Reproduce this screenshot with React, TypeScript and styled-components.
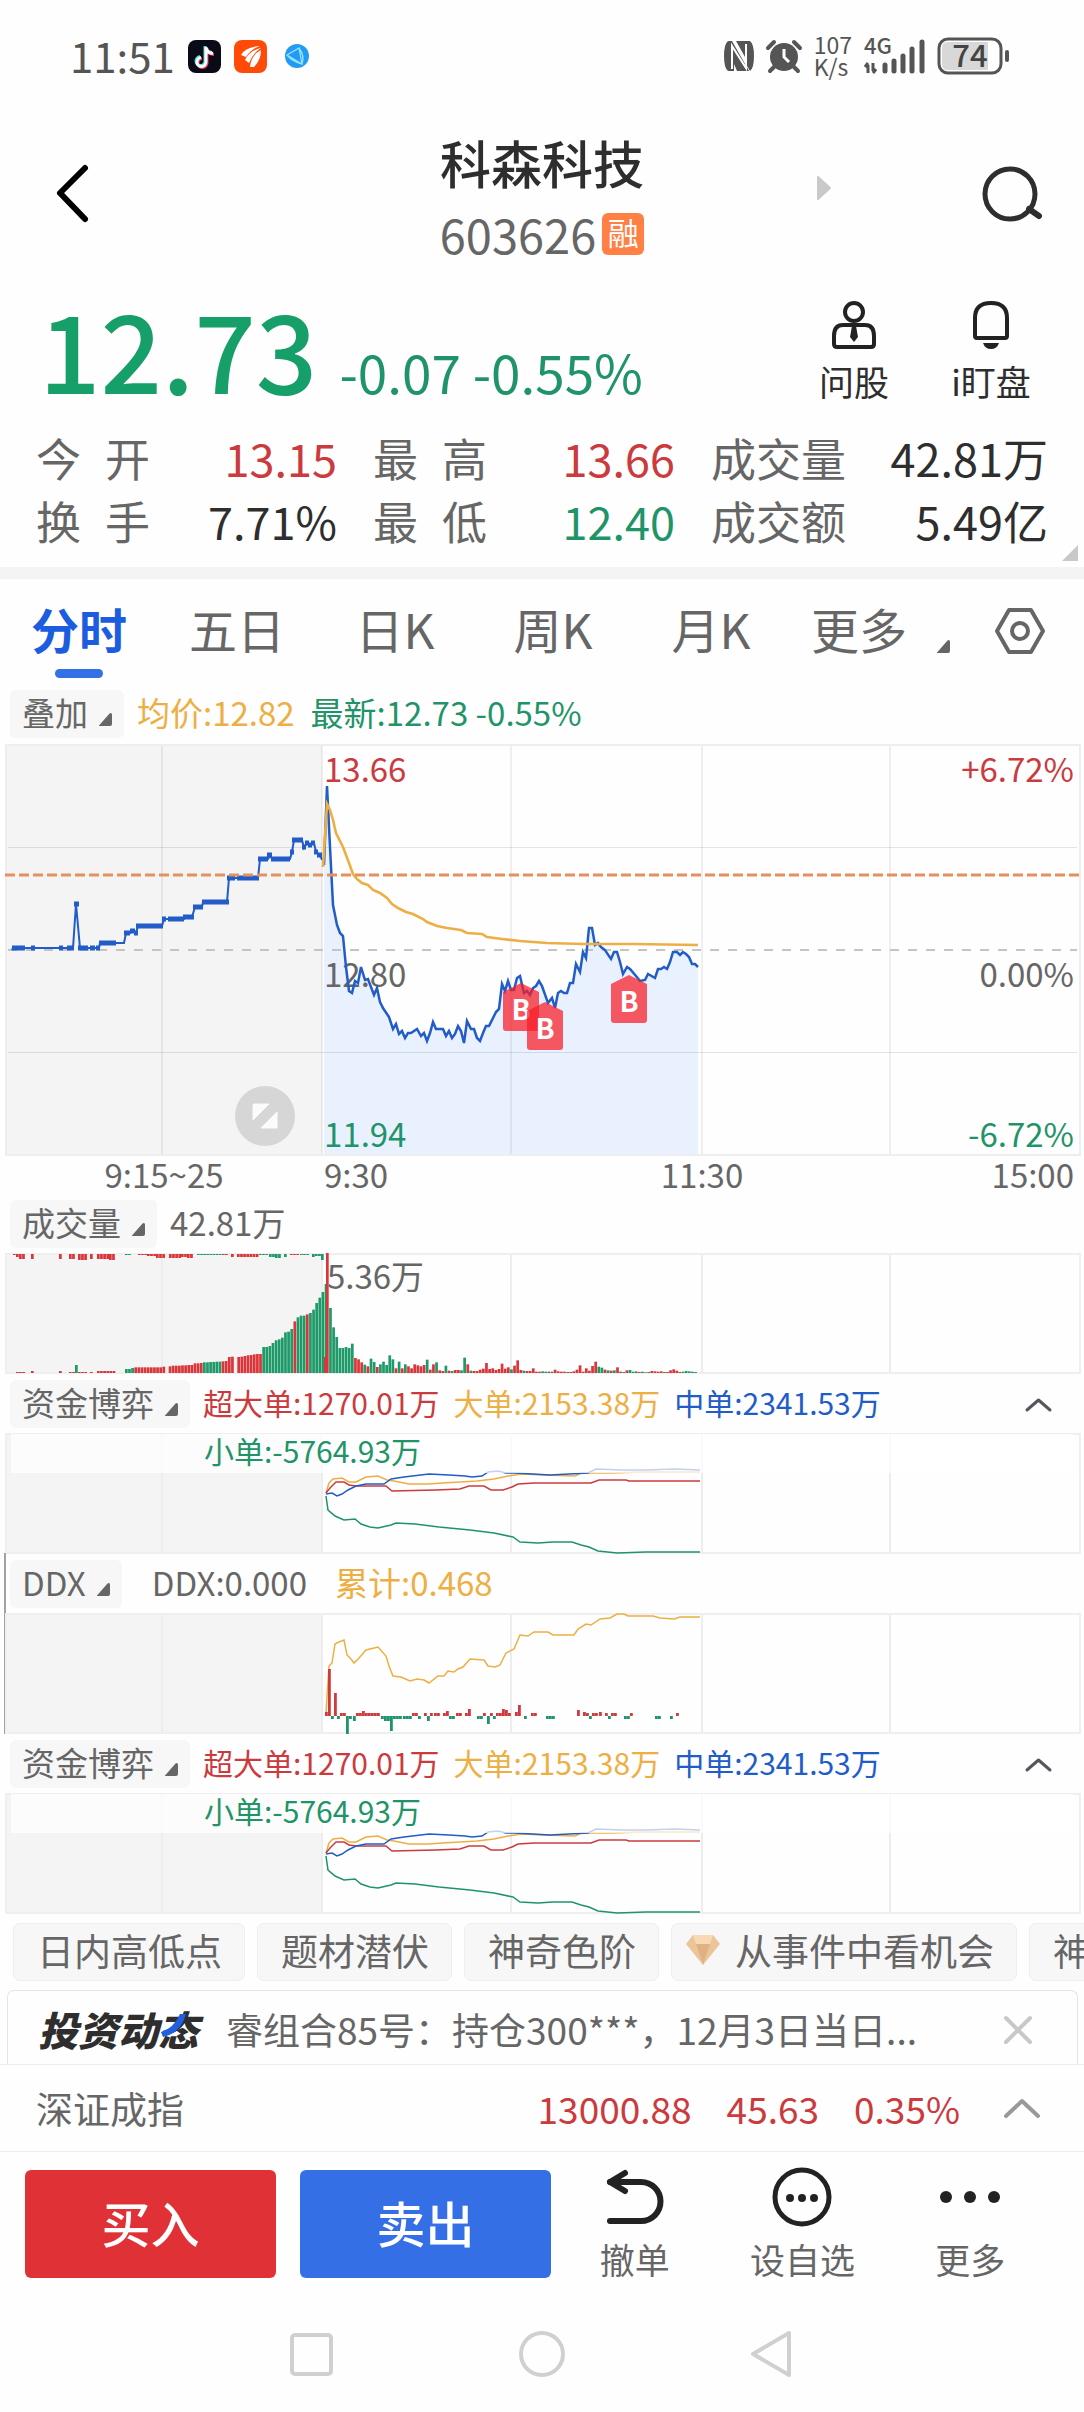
import React from "react";
import styled, { createGlobalStyle } from "styled-components";

const RED = "#cb3b3e";
const GREEN = "#1f9469";
const BLUE = "#215cc8";
const AMBER = "#edaf44";
const GREY = "#666666";
const INK = "#2e2e2e";

const GlobalStyle = createGlobalStyle`
  * { box-sizing: border-box; }
  body {
    margin: 0;
    background: #fefefe;
    color: ${INK};
    font-family: "Noto Sans CJK SC", "Noto Sans", sans-serif;
    overflow-x: hidden;
  }
  button {
    font: inherit;
    color: inherit;
    background: none;
    border: 0;
    padding: 0;
    cursor: pointer;
  }
  svg { display: block; flex: none; overflow: visible; }
`;

/* ---------- status bar ---------- */

const StatusBar = styled.div`
  display: flex;
  align-items: center;
  justify-content: space-between;
  height: 112px;
  padding: 0 73px 0 70px;
  color: #555;
`;

const StatusGroup = styled.div<{ $gap: number }>`
  display: flex;
  align-items: center;
  gap: ${(p) => p.$gap}px;
`;

const Clock = styled.span`
  font-size: 42px;
  line-height: 48px;
  padding-bottom: 2px;
`;

const NetSpeed = styled.span`
  display: flex;
  flex-direction: column;
  font-size: 23px;
  line-height: 22px;
  padding-bottom: 3px;
`;

/* ---------- header ---------- */

const Header = styled.header`
  display: grid;
  grid-template-columns: 1fr auto 1fr;
  align-items: center;
  height: 166px;
  padding: 0 40px;
`;

const BackButton = styled.button`
  margin-left: 12px;
`;

const TitleBlock = styled.div`
  display: flex;
  flex-direction: column;
  align-items: center;
  gap: 10px;
  padding-top: 6px;
`;

const StockName = styled.h1`
  margin: 0;
  font-size: 51px;
  font-weight: 500;
  line-height: 62px;
`;

const CodeRow = styled.div`
  display: flex;
  align-items: center;
  gap: 6px;
  font-size: 47px;
  line-height: 62px;
  color: ${GREY};
`;

const MarginBadge = styled.span`
  width: 42px;
  height: 42px;
  border-radius: 6px;
  background: #fe8045;
  color: #fff;
  font-size: 31px;
  line-height: 38px;
  text-align: center;
`;

const HeaderRight = styled.div`
  display: flex;
  align-items: center;
  justify-content: space-between;
  padding-left: 172px;
`;

const NextButton = styled.button`
  padding-bottom: 14px;
`;

/* ---------- quote ---------- */

const Quote = styled.section`
  position: relative;
  padding-bottom: 15px;
  border-bottom: 12px solid #f4f4f4;
`;

const PriceRow = styled.div`
  display: flex;
  justify-content: space-between;
  align-items: flex-start;
  height: 148px;
  padding: 9px 33px 0 39px;
  color: ${GREEN};
`;

const PriceGroup = styled.div`
  display: flex;
  align-items: flex-end;
  gap: 22px;
`;

const Price = styled.strong`
  font-size: 108px;
  font-weight: 500;
  line-height: 120px;
  color: #179f69;
`;

const Change = styled.span`
  font-size: 53px;
  line-height: 64px;
  padding-bottom: 4px;
`;

const QuickActions = styled.div`
  display: flex;
  gap: 17px;
  padding-top: 14px;
`;

const QuickButton = styled.button`
  display: flex;
  flex-direction: column;
  align-items: center;
  gap: 12px;
  width: 120px;
  color: ${INK};
  font-size: 35px;
  line-height: 40px;
`;

const Stats = styled.dl`
  display: grid;
  grid-template-columns: 301fr 302fr 337fr;
  column-gap: 36px;
  margin: 0;
  padding: 0 36px;
`;

const Stat = styled.div`
  display: flex;
  justify-content: space-between;
  font-size: 45px;
  line-height: 63px;
`;

const StatLabel = styled.dt<{ $spread?: boolean }>`
  color: ${GREY};
  width: ${(p) => (p.$spread ? "114px" : "auto")};
  text-align-last: ${(p) => (p.$spread ? "justify" : "auto")};
`;

const StatValue = styled.dd<{ $color: string }>`
  margin: 0;
  color: ${(p) => p.$color};
`;

const Corner = styled.svg`
  position: absolute;
  right: 6px;
  bottom: 6px;
`;

/* ---------- period tabs ---------- */

const Tabs = styled.nav`
  display: grid;
  grid-template-columns: repeat(5, 158fr) 180fr 114fr;
  height: 102px;
`;

const Tab = styled.button<{ $active?: boolean }>`
  position: relative;
  padding-bottom: 4px;
  font-size: 48px;
  line-height: 98px;
  font-weight: ${(p) => (p.$active ? 700 : 400)};
  color: ${(p) => (p.$active ? "#1c5cde" : GREY)};
  &::after {
    content: "";
    display: ${(p) => (p.$active ? "block" : "none")};
    position: absolute;
    left: calc(50% - 24px);
    bottom: 3px;
    width: 48px;
    height: 9px;
    border-radius: 5px;
    background: #3470e6;
  }
`;

const MoreTab = styled.button`
  display: flex;
  align-items: center;
  gap: 30px;
  padding: 0 0 4px 21px;
  font-size: 48px;
  line-height: 98px;
  color: ${GREY};
  svg { margin-top: 36px; }
`;

const SettingsButton = styled.button`
  display: flex;
  align-items: center;
  padding: 2px 0 0 24px;
`;

/* ---------- indicator panels ---------- */

const PanelHead = styled.div`
  display: flex;
  align-items: center;
  height: 48px;
  padding: 0 32px 0 10px;
`;

const OverlayHead = styled(PanelHead)`
  margin: 9px 0 6px;
`;

const Picker = styled.button`
  display: flex;
  align-items: center;
  gap: 11px;
  height: 48px;
  padding: 0 12px 4px 12px;
  border-radius: 6px;
  background: #f7f7f7;
  color: ${GREY};
  font-size: 33px;
  line-height: 44px;
  svg { margin-top: 14px; }
`;

const Values = styled.div<{ $indent: number; $gap: number; $size?: number }>`
  display: flex;
  flex: 1;
  gap: ${(p) => p.$gap}px;
  padding: 0 0 4px ${(p) => p.$indent}px;
  font-size: ${(p) => p.$size ?? 33}px;
  line-height: 44px;
  white-space: nowrap;
`;

const Value = styled.span<{ $color: string }>`
  color: ${(p) => p.$color};
`;

const Panel = styled.section<{ $cursor?: boolean }>`
  position: relative;
  padding-bottom: 6px;
  &::before {
    content: "";
    display: ${(p) => (p.$cursor ? "block" : "none")};
    position: absolute;
    left: 4px;
    top: -7px;
    bottom: 6px;
    width: 2px;
    background: #a3a3a3;
  }
`;

const ChartArea = styled.div`
  position: relative;
  margin-top: 5px;
`;

const Chart = styled.svg`
  width: 100%;
  height: auto;
`;

const MainChart = styled(Chart)`
  margin-bottom: 4px;
`;

const ValueStrip = styled.div`
  position: absolute;
  left: 11px;
  right: 11px;
  top: 1px;
  height: 39px;
  padding-left: 193px;
  background: rgba(255, 255, 255, 0.72);
  color: ${GREEN};
  font-size: 30px;
  line-height: 32px;
`;

/* ---------- chips, news, index ---------- */

const Chips = styled.div`
  display: flex;
  gap: 12px;
  margin-top: 3px;
  padding-left: 13px;
  overflow: hidden;
`;

const Chip = styled.button<{ $icon?: boolean }>`
  display: flex;
  flex: none;
  align-items: center;
  gap: 15px;
  height: 58px;
  padding: 0 22px 4px ${(p) => (p.$icon ? 14 : 23)}px;
  border: 1px solid #eeeeee;
  border-radius: 7px;
  background: #f7f7f7;
  color: ${GREY};
  font-size: 37px;
  line-height: 52px;
  white-space: nowrap;
`;

const News = styled.section`
  display: flex;
  align-items: center;
  height: 74px;
  margin: 9px 6px 0 7px;
  padding: 4px 45px 0 30px;
  border: 1px solid #e4e4e4;
  border-bottom: 0;
  border-radius: 7px 7px 0 0;
`;

const NewsLogo = styled.strong`
  position: relative;
  flex: none;
  margin-right: 28px;
  font-size: 40px;
  font-weight: 900;
  font-style: italic;
  line-height: 60px;
  padding-bottom: 2px;
  svg {
    position: absolute;
    right: 9px;
    top: 15px;
  }
`;

const NewsText = styled.a`
  flex: 1;
  padding-bottom: 2px;
  color: ${GREY};
  font-size: 37px;
  line-height: 60px;
  white-space: nowrap;
  text-decoration: none;
`;

const IndexRow = styled.section`
  display: flex;
  align-items: center;
  justify-content: space-between;
  height: 88px;
  padding: 0 44px 0 36px;
  border-top: 1px solid #ececec;
  border-bottom: 1px solid #ececec;
  color: ${GREY};
  font-size: 37px;
  line-height: 56px;
`;

const IndexValues = styled.div`
  display: flex;
  align-items: center;
  gap: 35px;
  color: ${RED};
  button { padding-left: 9px; }
`;

/* ---------- bottom bars ---------- */

const ActionBar = styled.div`
  display: flex;
  align-items: flex-start;
  height: 144px;
  padding: 18px 30px 0 25px;
`;

const TradePair = styled.div`
  display: grid;
  flex: 526 1 0;
  grid-template-columns: 1fr 1fr;
  gap: 24px;
`;

const TradeButton = styled.button<{ $bg: string }>`
  height: 108px;
  padding-bottom: 4px;
  border-radius: 6px;
  background: ${(p) => p.$bg};
  color: #fff;
  font-size: 49px;
  font-weight: 500;
  line-height: 104px;
`;

const Tools = styled.div`
  display: grid;
  flex: 503 1 0;
  grid-template-columns: repeat(3, 1fr);
`;

const ToolButton = styled.button`
  display: flex;
  flex-direction: column;
  align-items: center;
  gap: 9px;
  color: ${GREY};
  font-size: 35px;
  line-height: 48px;
`;

const SystemNav = styled.nav`
  display: flex;
  align-items: center;
  justify-content: center;
  gap: 182px;
  height: 116px;
`;

/* ---------- small drawings ---------- */

const Caret = ({ size = 13, color = GREY }: { size?: number; color?: string }) => (
  <svg width={size} height={size} viewBox="0 0 13 13" aria-hidden>
    <path d="M0 12.5 10.5.5Q13-1 13 2v9q0 2-2 2H1Q-.5 13 0 12.500Z" fill={color} />
  </svg>
);

const ChevronUp = ({ w, h, stroke, color }: { w: number; h: number; stroke: number; color: string }) => (
  <svg width={w} height={h} viewBox={`0 0 ${w} ${h}`} aria-hidden>
    <path
      d={`M2 ${h - 2} ${w / 2} 3 ${w - 2} ${h - 2}`}
      fill="none"
      stroke={color}
      strokeWidth={stroke}
      strokeLinecap="round"
      strokeLinejoin="round"
    />
  </svg>
);

/* ---------- chart data ---------- */

const GRID_X = [162, 322, 511, 702, 890];

const PRE_MARKET =
  "12,950 13,948 73,948 76,904 80,948 99,948 100,943 124,943 126,933 130,933 133,931 136,933 138,926 162,926 164,919 184,919 185,917 192,917 195,907 202,907 203,902 227,902 229,878 258,878 260,859 268,859 270,855 272,859 290,859 292,852 294,840 302,840 304,848 307,843 310,845 314,843 316,852 320,855 322,860";

const PRE_TICKS =
  "M12 948H25M31 948H35M59 948H63M67 948H74M74 904H79M78 948H88M90 948H95M96 948H100M99 943H116M124 933H130M130 931H135M134 933H138M136 926H163M162 919H166M168 919H184M183 917H194M193 907H203M202 902H229M227 878H235M237 878H259M258 859H268M267 855H272M271 859H290M290 852H294M292 840H303M302 847H306M305 843H309M308 845H312M311 843H315M314 852H318M317 855H322";

const PRICE =
  "324,865 327,786 330,847 333,905 337,925 340,933 343,936 346,967 349,991 352,993 355,981 358,983 361,967 365,980 368,979 374,995 377,988 380,1002 383,1008 389,1017 393,1029 396,1024 399,1034 402,1031 405,1038 408,1033 411,1033 417,1029 421,1036 424,1033 427,1041 430,1033 433,1022 436,1029 443,1029 446,1036 449,1031 452,1038 455,1034 458,1026 461,1031 464,1043 467,1021 471,1029 474,1029 477,1038 480,1041 483,1033 486,1026 489,1026 496,1012 499,1009 502,984 505,991 508,981 511,990 514,990 517,978 520,976 524,993 527,991 530,995 533,988 536,986 539,981 542,986 548,1003 552,998 555,1008 558,993 561,991 564,993 567,993 570,983 573,983 576,964 580,972 583,952 586,958 589,928 592,928 595,945 598,943 601,947 605,950 611,959 614,952 617,952 620,962 623,974 627,967 630,969 636,976 640,981 645,980 648,974 655,978 658,969 661,969 664,967 667,969 670,962 673,952 677,952 680,955 683,952 686,954 689,957 692,964 695,964 698,967";

const AVERAGE =
  "323,867 327,804 330,810 333,820 336,833 343,847 349,863 353,874 357,879 362,883 368,885 373,890 380,893 387,898 392,904 398,908 406,912 413,914 423,919 427,922 437,926 447,928 461,930 467,933 482,934 487,937 502,939 520,941 547,943 583,944 633,944 698,945";

const MARKERS = [
  { x: 503, y: 983 },
  { x: 527, y: 1002 },
  { x: 611, y: 975 },
];

/* Volume bars: colour letter followed by the height in thirds of a unit. */
const PRE_VOLUME =
  "G12 G12 G15 R17 R17 R17 R17 R17 R17 R17 R17 R17 R19 _ R20 R22 R22 R22 R23 R23 R24 R24 R29 R29 R30 G32 G32 G33 G33 G34 G34 R35 R36 R48 R49 _ R48 R49 R51 R53 R54 R56 R57 R57 G78 G78 G81 G90 G98 G101 G106 G122 G124 G132 R155 G167 G172 G172 R176 G180 G190 G210 G226 G243 G267";
const VOLUME =
  "R360 G195 G137 G108 G75 G75 G78 G75 G88 R45 R41 R32 G25 R20 G43 G33 R18 G26 G34 G24 G53 G41 R14 G34 R14 G26 R20 R14 R26 R23 R20 R24 G40 R10 R26 G32 R8 R6 G22 R7 G6 R9 R9 G8 G46 R26 G7 R6 R6 R10 R13 R30 R12 R14 R9 R12 R28 R13 R17 G11 R22 R38 R9 G7 R6 R6 R14 R4 R4 G5 G4 R4 G4 R10 R5 R4 R4 G3 R3 R5 R10 R23 R4 R14 R7 R21 R34 G19 G16 R10 G8 R7 G8 R17 R4 G3 R8 G9 G4 G5 R3 G4 R2 G3 R6 R5 R4 R5 G3 R3 R8 R11 R7 R3 G4 G6 G5 G4 G3";

/* Unmatched auction volume, hanging from the top: [x, count, height, colour]. */
const HANGING: [number, number, number, string][] = [
  [13, 1, 1, "R"], [16, 1, 3, "R"], [19, 2, 5, "R"], [31, 1, 5, "R"], [59, 1, 5, "R"],
  [69, 2, 5, "R"], [78, 3, 6, "R"], [90, 1, 5, "R"], [97, 4, 5, "R"], [109, 2, 6, "R"],
  [125, 2, 1, "G"], [138, 3, 1, "R"], [147, 3, 2, "R"], [156, 3, 4, "R"], [169, 4, 4, "R"],
  [181, 2, 3, "R"], [187, 2, 4, "R"], [197, 8, 1, "G"], [222, 2, 1, "R"], [231, 1, 3, "R"],
  [237, 7, 3, "R"], [259, 3, 1, "G"], [269, 2, 3, "G"], [275, 2, 4, "G"], [284, 1, 3, "G"],
  [290, 3, 1, "R"], [300, 3, 1, "G"], [312, 1, 3, "G"], [315, 2, 2, "G"], [321, 1, 6, "G"],
];

const PRE_SPECKS: [number, number, number, string][] = [
  [16, 3, 1, "R"], [31, 1, 2, "R"], [59, 1, 2, "R"], [69, 2, 1, "R"], [75, 1, 8, "G"],
  [78, 3, 1, "R"], [90, 1, 1, "R"], [97, 6, 2, "R"],
];

const FUND_LINES = [
  {
    color: AMBER,
    points:
      "326,60 329,50 333,46 342,45 349,49 356,49 366,44 378,43 387,47 394,48 409,51 429,51 442,50 460,49 477,48 494,46 508,43 522,41 543,42 575,43 581,40 612,40 640,39 700,39",
  },
  {
    color: RED,
    points:
      "326,60 330,55 336,49 344,49 349,52 356,53 386,53 392,58 436,57 460,56 469,53 484,53 491,57 503,57 512,54 518,51 534,50 591,50 599,47 626,47 629,48 700,48",
  },
  {
    color: BLUE,
    points:
      "326,61 332,60 337,63 342,61 348,57 356,53 366,51 384,51 391,46 404,44 429,41 449,42 465,43 472,44 482,43 488,39 498,38 506,40 515,40 550,42 588,40 596,36 622,37 646,37 674,36 700,37",
  },
  {
    color: GREEN,
    points:
      "326,63 328,77 335,83 344,87 355,86 361,91 370,94 378,95 391,92 396,90 415,91 439,94 470,97 494,100 513,104 520,109 538,110 553,109 572,109 581,112 589,114 598,118 617,120 646,119 700,119",
  },
];

const DDX_LINE =
  "326,100 329,53 332,50 335,31 339,29 344,27 347,42 351,46 354,50 359,45 366,37 378,34 386,43 389,53 393,63 401,64 410,68 417,66 424,67 429,70 438,63 444,63 448,58 454,59 458,56 463,54 470,46 484,47 488,53 495,54 500,52 506,40 514,36 520,22 528,23 534,19 548,19 553,22 574,22 578,16 586,11 591,12 600,6 610,5 617,1 624,1 628,3 653,3 660,5 674,6 680,4 700,4";

const DDX_BARS =
  "326:4 329:47 332:-3 335:23 338:-3 341:3 344:3 347:-18 350:-3 354:-5 357:3 360:3 363:5 366:3 369:3 372:3 375:3 378:3 382:-3 385:-5 388:-5 391:-15 394:-3 397:-3 400:-3 404:-3 407:-3 410:-3 413:3 416:3 419:-3 425:3 428:-5 431:3 435:3 438:3 444:3 447:5 450:-3 453:-3 457:3 460:3 466:3 469:7 478:-3 481:-3 484:3 488:-8 491:3 494:-3 497:3 500:3 503:7 506:6 509:3 516:4 519:11 525:-3 532:3 535:3 547:-3 550:-3 553:-3 578:6 584:4 587:3 590:-3 593:3 596:3 600:4 606:3 609:-3 612:3 615:3 625:-3 628:-3 631:3 656:-3 659:-3 671:-3 677:3";

const STEP = 3.12;
const barColor = (c: string) => (c === "R" ? "#da3539" : "#1d9a68");

/* ---------- charts ---------- */

const SmallFrame = () => (
  <>
    <rect x="5" y="0" width="317" height="121" fill="#f4f4f4" />
    {GRID_X.map((x) => (
      <path key={x} d={`M${x} 1V120`} stroke="#ededed" strokeWidth="2" />
    ))}
    <rect x="6" y="1" width="1074" height="119" fill="none" stroke="#efefef" strokeWidth="2" />
  </>
);

const PriceChart = () => (
  <MainChart viewBox="0 744 1084 452" role="img" aria-label="分时走势">
    <rect x="5" y="745" width="317" height="410" fill="#f4f4f4" />
    <polygon points={`324,1154 ${PRICE} 698,1154`} fill="#e9f0fe" />
    {GRID_X.map((x) => (
      <path key={x} d={`M${x} 745V1155`} stroke="rgba(0,0,0,.06)" strokeWidth="2" />
    ))}
    <path d="M8 847.500H1077M8 1052.500H1077" stroke="rgba(0,0,0,.1)" />
    <rect x="6" y="745" width="1074" height="410" fill="none" stroke="#eeeeee" strokeWidth="2" />
    <path d="M8 950H1077" stroke="#c4c4c4" strokeWidth="2" strokeDasharray="9 9" />
    <g fontSize="33">
      <text x="324" y="782" fill={RED}>13.66</text>
      <text x="324" y="987" fill={GREY}>12.80</text>
      <text x="324" y="1147" fill={GREEN}>11.94</text>
      <g textAnchor="end">
        <text x="1074" y="782" fill={RED}>+6.72%</text>
        <text x="1074" y="987" fill={GREY}>0.00%</text>
        <text x="1074" y="1147" fill={GREEN}>-6.72%</text>
      </g>
      <g fill={GREY}>
        <text x="164" y="1188" textAnchor="middle">9:15~25</text>
        <text x="324" y="1188">9:30</text>
        <text x="702" y="1188" textAnchor="middle">11:30</text>
        <text x="1074" y="1188" textAnchor="end">15:00</text>
      </g>
    </g>
    <g fill="none" stroke={BLUE} strokeWidth="2">
      <polyline points={PRE_MARKET} />
      <path d={PRE_TICKS} strokeWidth="5" />
      <polyline points={PRICE} strokeWidth="2.500" />
    </g>
    <polyline points={AVERAGE} fill="none" stroke={AMBER} strokeWidth="2.600" />
    <path d="M5 875H1079" stroke="#e5905f" strokeWidth="3" strokeDasharray="10 4" />
    {MARKERS.map(({ x, y }) => (
      <g key={x} transform={`translate(${x} ${y})`}>
        <path d="M18 0 36 9V45Q36 48 33 48H3Q0 48 0 45V9Z" fill="rgba(250,28,38,.72)" />
        <text x="18" y="37" textAnchor="middle" fontSize="28" fontWeight="700" fill="#fff">B</text>
      </g>
    ))}
    <circle cx="265" cy="1116" r="30" fill="#d6d6d6" />
    <path d="M254 1104H269L253 1120V1105ZM277 1112V1128H261Z" fill="#fbfbfb" stroke="#fbfbfb" strokeLinejoin="round" />
  </MainChart>
);

const Bars = ({ data, start }: { data: string; start: number }) => (
  <>
    {data.split(" ").map((item, i) => {
      const h = Number(item.slice(1)) / 3;
      return item === "_" ? null : (
        <rect key={i} x={start + i * STEP} y={120 - h} width="2.700" height={h} fill={barColor(item[0])} />
      );
    })}
  </>
);

const VolumeChart = () => (
  <Chart viewBox="0 0 1084 121" role="img" aria-label="成交量">
    <SmallFrame />
    <Bars data={PRE_VOLUME} start={125} />
    <rect x="324" y="104" width="2" height="16" fill={barColor("R")} />
    <Bars data={VOLUME} start={326} />
    {HANGING.flatMap(([x, n, h, c]) =>
      Array.from({ length: n }, (_, i) => (
        <rect key={`${x}-${i}`} x={x + i * STEP} y="1" width="2.700" height={h} fill={barColor(c)} />
      ))
    )}
    {PRE_SPECKS.flatMap(([x, n, h, c]) =>
      Array.from({ length: n }, (_, i) => (
        <rect key={`s${x}-${i}`} x={x + i * STEP} y={120 - h} width="2.700" height={h} fill={barColor(c)} />
      ))
    )}
    <text x="327" y="36" fontSize="33" fill={GREY}>5.36万</text>
  </Chart>
);

const DdxChart = () => (
  <Chart viewBox="0 0 1084 121" role="img" aria-label="DDX">
    <SmallFrame />
    <polyline points={DDX_LINE} fill="none" stroke={AMBER} strokeWidth="1.500" />
    {DDX_BARS.split(" ").map((item) => {
      const [x, v] = item.split(":").map(Number);
      return (
        <rect
          key={x}
          x={x - 1}
          y={v > 0 ? 103 - v : 103}
          width="2.800"
          height={Math.abs(v)}
          fill={v > 0 ? "#cf3a3d" : GREEN}
        />
      );
    })}
  </Chart>
);

const FundPanel = () => (
  <Panel>
    <PanelHead>
      <Picker aria-haspopup="listbox">资金博弈 <Caret /></Picker>
      <Values $indent={13} $gap={14} $size={30}>
        <Value $color={RED}>超大单:1270.01万</Value>
        <Value $color={AMBER}>大单:2153.38万</Value>
        <Value $color={BLUE}>中单:2341.53万</Value>
      </Values>
      <button aria-label="收起">
        <ChevronUp w={27} h={15} stroke={3} color="#55575e" />
      </button>
    </PanelHead>
    <ChartArea>
      <Chart viewBox="0 0 1084 121" role="img" aria-label="资金博弈">
        <SmallFrame />
        {FUND_LINES.map((l) => (
          <polyline key={l.color} points={l.points} fill="none" stroke={l.color} strokeWidth="1.500" />
        ))}
      </Chart>
      <ValueStrip>小单:-5764.93万</ValueStrip>
    </ChartArea>
  </Panel>
);

/* ---------- status icons ---------- */

const AppIcons = () => (
  <>
    <svg width="33" height="33" viewBox="0 0 33 33" aria-hidden>
      <rect width="33" height="33" rx="8" fill="#0a0b16" />
      <g fill="none" strokeWidth="3">
        <path d="M17 6V21a4.500 4.500 0 1 1-5-4.500M17 7q1.500 5 7 5.500" stroke="#2ee6e0" />
        <path d="M19 8V23a4.500 4.500 0 1 1-5-4.500M19 9q1.500 5 7 5.500" stroke="#f5355c" />
        <path d="M18 7V22a4.500 4.500 0 1 1-5-4.500M18 8q1.500 5 7 5.500" stroke="#fff" />
      </g>
    </svg>
    <svg width="33" height="33" viewBox="0 0 33 33" aria-hidden>
      <rect width="33" height="33" rx="8" fill="#ff4a08" />
      <path d="M7 15Q11 7 26 6 17 9 12 17ZM11 20Q16 10 27 8 19 13 15 23ZM16 27Q17 15 27 10 27 20 20 27Z" fill="#fff" />
    </svg>
    <svg width="34" height="24" viewBox="0 0 34 24" aria-hidden>
      <circle cx="17" cy="12" r="12" fill="#229bf5" />
      <path d="M7 11 19 4 22 20ZM19 4Q25 12 22 20M7 11Q13 18 22 20" fill="none" stroke="#9be1ff" strokeWidth="1.300" />
    </svg>
  </>
);

const NfcIcon = () => (
  <svg width="30" height="32" viewBox="0 0 30 32" aria-hidden>
    <path d="M4 1H8L25 31H13L10 24V31H4Q0 28 0 16T4 1ZM12 1H26Q30 4 30 16T26 31L23 26V10L21 6V17Z" fill="#555" />
    <path d="M8 29V6L22 28V4" fill="none" stroke="#fff" strokeWidth="2" />
  </svg>
);

const AlarmIcon = () => (
  <svg width="36" height="34" viewBox="0 0 36 34" aria-hidden>
    <circle cx="18" cy="18" r="14" fill="#555" />
    <path d="M18 10V18L23 23" fill="none" stroke="#fff" strokeWidth="3" />
    <path d="M2 9 8 3M34 9 28 3M8 28 4 32M28 28 32 32" stroke="#555" strokeWidth="4" strokeLinecap="round" />
  </svg>
);

const SignalIcon = () => (
  <svg width="61" height="36" viewBox="0 0 61 36" aria-hidden>
    <text x="0" y="16" fontSize="22" fontWeight="500" fill="#555">4G</text>
    <path d="M4 35V27M1 29 4 25M9 25V33M12 31 9 35" stroke="#555" strokeWidth="3" fill="none" />
    <path d="M21 33V27M30 33V23M39 33V18M48 33V11M58 33V4" stroke="#555" strokeWidth="5" strokeLinecap="round" />
  </svg>
);

const BatteryIcon = () => (
  <svg width="74" height="38" viewBox="0 0 74 38" aria-hidden>
    <rect x="2" y="2" width="62" height="34" rx="9" fill="#fff" stroke="#555" strokeWidth="3" />
    <path d="M11 5H51V33H11Q5 33 5 27V11Q5 5 11 5Z" fill="#d8d8d8" />
    <text x="33" y="30" textAnchor="middle" fontSize="31" fontWeight="500" fill="#444">74</text>
    <rect x="68" y="13" width="4" height="12" rx="2" fill="#555" />
  </svg>
);

/* ---------- page ---------- */

const STATS = [
  { label: "今 开", value: "13.15", color: RED, spread: true },
  { label: "最 高", value: "13.66", color: RED, spread: true },
  { label: "成交量", value: "42.81万", color: INK },
  { label: "换 手", value: "7.71%", color: INK, spread: true },
  { label: "最 低", value: "12.40", color: GREEN, spread: true },
  { label: "成交额", value: "5.49亿", color: INK },
];

export default function App() {
  return (
    <>
      <GlobalStyle />
      <StatusBar>
        <StatusGroup $gap={13}>
          <Clock>11:51</Clock>
          <AppIcons />
        </StatusGroup>
        <StatusGroup $gap={12}>
          <NfcIcon />
          <AlarmIcon />
          <NetSpeed>
            <span>107</span>
            <span>K/s</span>
          </NetSpeed>
          <SignalIcon />
          <BatteryIcon />
        </StatusGroup>
      </StatusBar>

      <Header>
        <div>
          <BackButton aria-label="返回">
            <svg width="40" height="60" viewBox="0 0 40 60">
              <path d="M33 5 8 30 33 56" fill="none" stroke="#000" strokeWidth="6" strokeLinecap="round" strokeLinejoin="round" />
            </svg>
          </BackButton>
        </div>
        <TitleBlock>
          <StockName>科森科技</StockName>
          <CodeRow>
            603626<MarginBadge>融</MarginBadge>
          </CodeRow>
        </TitleBlock>
        <HeaderRight>
          <NextButton aria-label="下一只">
            <svg width="16" height="26" viewBox="0 0 16 26">
              <path d="M2 2 14 13 2 24Z" fill="#c9c9c9" stroke="#c9c9c9" strokeWidth="2" strokeLinejoin="round" />
            </svg>
          </NextButton>
          <button aria-label="搜索">
            <svg width="62" height="60" viewBox="0 0 62 60">
              <circle cx="28" cy="29" r="25" fill="none" stroke="#2e2e2e" strokeWidth="5" />
              <path d="M47 44 57 51" stroke="#2e2e2e" strokeWidth="6" strokeLinecap="round" />
            </svg>
          </button>
        </HeaderRight>
      </Header>

      <Quote>
        <PriceRow>
          <PriceGroup>
            <Price>12.73</Price>
            <Change>-0.07 -0.55%</Change>
          </PriceGroup>
          <QuickActions>
            <QuickButton>
              <svg width="48" height="48" viewBox="0 0 48 48" fill="none" stroke="#222" strokeWidth="4" aria-hidden>
                <circle cx="24" cy="11" r="9" />
                <path d="M13 24H35Q44 24 44 35V43Q44 46 41 46H7Q4 46 4 43V35Q4 24 13 24Z" />
                <path d="M22 25H26L28 36 24 41 20 36Z" fill="#222" stroke="none" />
              </svg>
              问股
            </QuickButton>
            <QuickButton>
              <svg width="40" height="48" viewBox="0 0 40 48" fill="none" stroke="#222" strokeWidth="4" aria-hidden>
                <path d="M4 35V17Q4 2 20 2T36 17V35Q36 37 34 37H6Q4 37 4 35Z" />
                <path d="M12 42H28Q26 48 20 48T12 42Z" fill="#222" stroke="none" />
              </svg>
              i盯盘
            </QuickButton>
          </QuickActions>
        </PriceRow>
        <Stats>
          {STATS.map((s) => (
            <Stat key={s.label}>
              <StatLabel $spread={s.spread}>{s.label}</StatLabel>
              <StatValue $color={s.color}>{s.value}</StatValue>
            </Stat>
          ))}
        </Stats>
        <Corner width="16" height="16" viewBox="0 0 16 16" aria-hidden>
          <path d="M0 16 16 0V16Z" fill="#c8c8c8" />
        </Corner>
      </Quote>

      <Tabs>
        <Tab $active>分时</Tab>
        <Tab>五日</Tab>
        <Tab>日K</Tab>
        <Tab>周K</Tab>
        <Tab>月K</Tab>
        <MoreTab>
          更多 <Caret />
        </MoreTab>
        <SettingsButton aria-label="图表设置">
          <svg width="52" height="48" viewBox="0 0 52 48" fill="none" stroke={GREY} strokeWidth="4" strokeLinejoin="round">
            <path d="M15 3H37L49 24 37 45H15L3 24Z" />
            <circle cx="26" cy="24" r="8" />
          </svg>
        </SettingsButton>
      </Tabs>

      <OverlayHead>
        <Picker aria-haspopup="listbox">叠加 <Caret /></Picker>
        <Values $indent={13} $gap={16}>
          <Value $color={AMBER}>均价:12.82</Value>
          <Value $color={GREEN}>最新:12.73 -0.55%</Value>
        </Values>
      </OverlayHead>
      <PriceChart />

      <Panel>
        <PanelHead>
          <Picker aria-haspopup="listbox">成交量 <Caret /></Picker>
          <Values $indent={13} $gap={0}>
            <Value $color={GREY}>42.81万</Value>
          </Values>
        </PanelHead>
        <ChartArea>
          <VolumeChart />
        </ChartArea>
      </Panel>

      <FundPanel />

      <Panel $cursor>
        <PanelHead>
          <Picker aria-haspopup="listbox">DDX <Caret /></Picker>
          <Values $indent={30} $gap={28}>
            <Value $color={GREY}>DDX:0.000</Value>
            <Value $color={AMBER}>累计:0.468</Value>
          </Values>
        </PanelHead>
        <ChartArea>
          <DdxChart />
        </ChartArea>
      </Panel>

      <FundPanel />

      <Chips>
        <Chip>日内高低点</Chip>
        <Chip>题材潜伏</Chip>
        <Chip>神奇色阶</Chip>
        <Chip $icon>
          <svg width="34" height="30" viewBox="0 0 34 30" aria-hidden>
            <path d="M7 0H27L34 9 17 30 0 9Z" fill="#ecc49a" />
            <path d="M7 0H27L24 9H10Z" fill="#f8d9b6" />
            <path d="M10 9H24L17 30Z" fill="#e2b181" />
          </svg>
          从事件中看机会
        </Chip>
        <Chip>神奇电波</Chip>
      </Chips>

      <News>
        <NewsLogo>
          投资动态
          <svg width="28" height="24" viewBox="0 0 28 24" aria-hidden>
            <path d="M19 0H25Q20 19 2 23L0 18Q13 14 19 0Z" fill="#1f5fe0" />
          </svg>
        </NewsLogo>
        <NewsText href="#news">睿组合85号：持仓300***，12月3日当日...</NewsText>
        <button aria-label="关闭">
          <svg width="28" height="28" viewBox="0 0 28 28">
            <path d="M2 2 26 26M26 2 2 26" stroke="#c8c8c8" strokeWidth="4" strokeLinecap="round" />
          </svg>
        </button>
      </News>

      <IndexRow>
        <span>深证成指</span>
        <IndexValues>
          <span>13000.88</span>
          <span>45.63</span>
          <span>0.35%</span>
          <button aria-label="展开指数">
            <ChevronUp w={36} h={20} stroke={4} color="#999" />
          </button>
        </IndexValues>
      </IndexRow>

      <ActionBar>
        <TradePair>
          <TradeButton $bg="#e03236">买入</TradeButton>
          <TradeButton $bg="#346fe6">卖出</TradeButton>
        </TradePair>
        <Tools>
          <ToolButton>
            <svg width="60" height="56" viewBox="0 0 60 56" fill="none" stroke="#222" strokeWidth="6" strokeLinecap="round" strokeLinejoin="round" aria-hidden>
              <path d="M20 3 5 12 20 21" />
              <path d="M5 12H36A19 19 0 0 1 36 51H5" />
            </svg>
            撤单
          </ToolButton>
          <ToolButton>
            <svg width="60" height="56" viewBox="0 0 60 56" aria-hidden>
              <circle cx="30" cy="27" r="27" fill="none" stroke="#222" strokeWidth="5" />
              <g fill="#222">
                <circle cx="18" cy="28" r="4" />
                <circle cx="30" cy="28" r="4" />
                <circle cx="42" cy="28" r="4" />
              </g>
            </svg>
            设自选
          </ToolButton>
          <ToolButton>
            <svg width="60" height="56" viewBox="0 0 60 56" fill="#222" aria-hidden>
              <circle cx="6" cy="27" r="6" />
              <circle cx="30" cy="27" r="6" />
              <circle cx="54" cy="27" r="6" />
            </svg>
            更多
          </ToolButton>
        </Tools>
      </ActionBar>

      <SystemNav>
        <button aria-label="最近任务">
          <svg width="48" height="48" viewBox="0 0 48 48" fill="none" stroke="#d0d0d0" strokeWidth="4">
            <rect x="4" y="5" width="39" height="39" rx="3" />
          </svg>
        </button>
        <button aria-label="主屏幕">
          <svg width="48" height="48" viewBox="0 0 48 48" fill="none" stroke="#d0d0d0" strokeWidth="4">
            <circle cx="24" cy="24" r="21" />
          </svg>
        </button>
        <button aria-label="系统返回">
          <svg width="48" height="48" viewBox="0 0 48 48" fill="none" stroke="#d0d0d0" strokeWidth="4" strokeLinejoin="round">
            <path d="M41 3V45L5 24Z" />
          </svg>
        </button>
      </SystemNav>
    </>
  );
}
